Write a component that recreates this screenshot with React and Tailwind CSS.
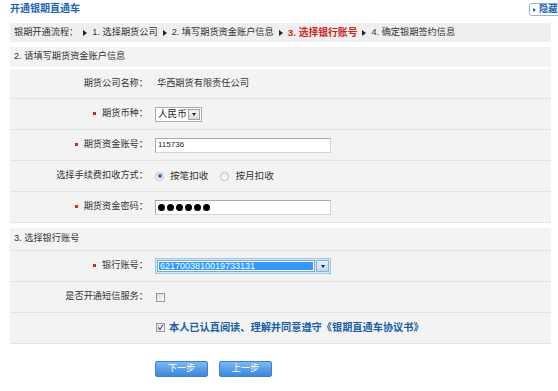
import React from "react";

function Tri() {
  return (
    <span className="inline-block w-0 h-0 border-y-[3px] border-y-transparent border-l-[4px] border-l-[#222] mx-[5px]" />
  );
}

function Star() {
  return <span className="inline-block w-[3px] h-[3px] bg-[#d22] mr-[6px] mb-[1px]" />;
}

function Row({ label, star, children }) {
  return (
    <div className="h-[31px] bg-[#f3f3f3] border-b border-[#e2e2e2] flex items-center">
      <div className="w-[138px] flex items-center justify-end shrink-0">
        {star && <Star />}
        <span>{label}</span>
      </div>
      <div className="ml-[7px] flex items-center">{children}</div>
    </div>
  );
}

function Radio({ checked, label }) {
  return (
    <span className="flex items-center mr-[12px]">
      <span className="w-[9px] h-[9px] rounded-full border border-[#b8bec6] bg-gradient-to-b from-[#e8ecf0] to-white flex items-center justify-center">
        {checked && <span className="w-[4px] h-[4px] rounded-full bg-[#2a6fc9]" />}
      </span>
      <span className="ml-[6px] text-[9.6px]">{label}</span>
    </span>
  );
}

function Button({ children }) {
  return (
    <button className="w-[53px] h-[16px] rounded-[2px] border border-[#3b80cf] bg-gradient-to-b from-[#7ab8f0] to-[#3c87da] text-white text-[9.2px] leading-none flex items-center justify-center">
      {children}
    </button>
  );
}

export default function App() {
  return (
    <div className="w-[558px] h-[391px] bg-white overflow-hidden font-['Liberation_Sans','Noto_Sans_CJK_SC',sans-serif] text-[9.2px] text-[#333] leading-none">
      <div className="flex items-start justify-between pl-[10px] h-[23px]">
        <div className="text-[10px] font-bold text-[#1b65b5] mt-[4px]">开通银期直通车</div>
        <div className="mt-[3px] mr-[-6px] h-[13px] w-[35px] border border-[#8fb6dc] rounded-[3px] flex items-center pl-[3px] text-[#1b65b5] font-bold text-[9.2px] shrink-0">
          <span className="inline-block w-0 h-0 border-y-[2px] border-y-transparent border-l-[3px] border-l-[#1b65b5] mr-[3px]" />
          隐藏
        </div>
      </div>
      <div className="px-[10px] w-[561px] -mr-[3px]">
        <div className="w-[541px]">
          <div className="h-[19px] bg-[#efefef] flex items-center pl-[4px]">
            <span>银期开通流程：</span>
            <Tri />
            <span>1. 选择期货公司</span>
            <Tri />
            <span>2. 填写期货资金账户信息</span>
            <Tri />
            <span className="text-[#c8281e] font-bold text-[9.8px]">3. 选择银行账号</span>
            <Tri />
            <span>4. 确定银期签约信息</span>
          </div>

          <div className="mt-[5px] h-[22px] bg-[#f3f3f3] border-b-2 border-white flex items-center pl-[4px]">
            2. 请填写期货资金账户信息
          </div>

          <div className="h-[30px] bg-[#f3f3f3] border-b border-[#e2e2e2] flex items-center">
            <div className="w-[138px] text-right shrink-0">期货公司名称：</div>
            <div className="ml-[9px]">华西期货有限责任公司</div>
          </div>

          <Row label="期货币种：" star>
            <div className="h-[15px] w-[47px] border border-[#a5acb5] bg-white flex items-center">
              <span className="pl-[2px] text-[9.6px] text-[#222] flex-1 whitespace-nowrap">人民币</span>
              <span className="w-[12px] h-[11px] mr-[1px] shrink-0 border border-[#9aa4ae] bg-gradient-to-b from-[#f4f4f4] to-[#d8d8d8] flex items-center justify-center">
                <span className="w-0 h-0 border-x-[2.5px] border-x-transparent border-t-[3px] border-t-[#222]" />
              </span>
            </div>
          </Row>

          <Row label="期货资金账号：" star>
            <div className="h-[15px] w-[176px] border border-[#a8a8a8] border-b-[#d6d6d6] border-r-[#d6d6d6] bg-white flex items-center pl-[2px] text-[8px] text-[#222]">
              115736
            </div>
          </Row>

          <Row label="选择手续费扣收方式：">
            <Radio checked label="按笔扣收" />
            <Radio label="按月扣收" />
          </Row>

          <Row label="期货资金密码：" star>
            <div className="h-[15px] w-[176px] border border-[#a8a8a8] border-b-[#d6d6d6] border-r-[#d6d6d6] bg-white flex items-center pl-[2px] gap-[2px]">
              {[0, 1, 2, 3, 4, 5].map((i) => (
                <span key={i} className="w-[7px] h-[7px] rounded-full bg-black" />
              ))}
            </div>
          </Row>

          <div className="mt-[5px] h-[23px] bg-[#f3f3f3] border-b border-[#e2e2e2] flex items-center pl-[4px]">
            3. 选择银行账号
          </div>

          <Row label="银行账号：" star>
            <div className="h-[16px] w-[176px] border border-[#9cc6ea] bg-[#d5e8f8] flex items-center p-[1px]">
              <div className="flex-1 h-full bg-white border border-[#7aa7d6] flex items-center p-[1px]">
                <div className="flex-1 h-full bg-[#3399ff] text-white text-[9px] flex items-center pl-[1px]">6217003810019733131</div>
              </div>
              <span className="w-[13px] h-full ml-[1px] border border-[#8ab0d8] bg-gradient-to-b from-[#e6f2fc] to-[#bcd9f2] flex items-center justify-center">
                <span className="w-0 h-0 border-x-[2.5px] border-x-transparent border-t-[3px] border-t-[#222]" />
              </span>
            </div>
          </Row>

          <Row label="是否开通短信服务：">
            <span className="w-[9px] h-[9px] border border-[#9a9a9a] bg-gradient-to-br from-[#d8d8d8] to-white ml-[1px]" />
          </Row>

          <div className="h-[31px] bg-[#f3f3f3] border-b border-[#e2e2e2] flex items-center">
            <div className="w-[138px] shrink-0" />
            <div className="ml-[8px] flex items-center">
              <span className="w-[9px] h-[9px] border border-[#9a9a9a] bg-gradient-to-br from-[#dcdcdc] to-white flex items-center justify-center">
                <svg width="7" height="7" viewBox="0 0 7 7">
                  <path d="M1 3.5 L3 5.5 L6 0.8" fill="none" stroke="#3a5ea8" strokeWidth="1.2" />
                </svg>
              </span>
              <span className="ml-[4px] text-[#1a5fa8] font-bold text-[10.2px]">本人已认真阅读、理解并同意遵守《银期直通车协议书》</span>
            </div>
          </div>

          <div className="mt-[17px] pl-[145px] flex gap-[11px]">
            <Button>下一步</Button>
            <Button>上一步</Button>
          </div>
        </div>
      </div>
    </div>
  );
}
